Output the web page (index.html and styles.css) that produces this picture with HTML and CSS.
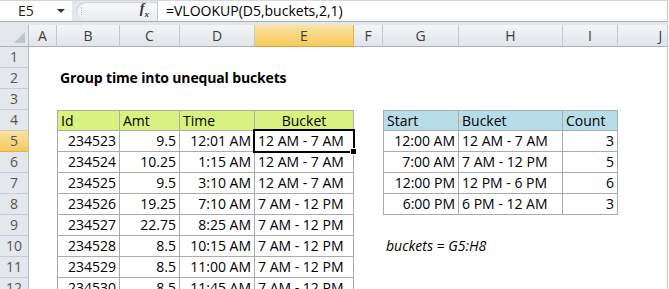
FILE: index.html
```html
<!DOCTYPE html>
<html lang="en">
<head>
    <meta charset="UTF-8">
    <title>Group time into unequal buckets</title>
    <link rel="stylesheet" href="styles.css">
</head>
<body>

    <!-- Formula Bar -->
    <div class="formula-bar">
        <div class="name-box">E5<span class="dropdown"></span></div>
        <div class="fx-area">
            <div class="grip">
                <span class="dots"></span>
                <span class="fx"><i>f</i><sub>x</sub></span>
            </div>
        </div>
        <div class="formula">=VLOOKUP(D5,buckets,2,1)</div>
    </div>
    <div class="band"></div>

    <!-- Sheet -->
    <div class="sheet">
        <div class="row heads">
            <div class="corner"></div>
            <div class="ch">A</div>
            <div class="ch">B</div>
            <div class="ch">C</div>
            <div class="ch">D</div>
            <div class="ch sel">E</div>
            <div class="ch">F</div>
            <div class="ch">G</div>
            <div class="ch">H</div>
            <div class="ch">I</div>
            <div class="ch">J</div>
        </div>

        <div class="row">
            <div class="rh">1</div>
        </div>

        <div class="row">
            <div class="rh">2</div>
            <div></div>
            <div class="c title">Group time into unequal buckets</div>
        </div>

        <div class="row">
            <div class="rh">3</div>
        </div>

        <div class="row">
            <div class="rh">4</div>
            <div></div>
            <div class="c t tl tt green">Id</div>
            <div class="c t tt green">Amt</div>
            <div class="c t tt green">Time</div>
            <div class="c t tt green ctr">Bucket</div>
            <div></div>
            <div class="c t tl tt blue">Start</div>
            <div class="c t tt blue">Bucket</div>
            <div class="c t tt blue">Count</div>
        </div>

        <div class="row">
            <div class="rh sel">5</div>
            <div></div>
            <div class="c t tl r">234523</div>
            <div class="c t r">9.5</div>
            <div class="c t r">12:01 AM</div>
            <div class="c t active">12 AM - 7 AM</div>
            <div></div>
            <div class="c t tl r">12:00 AM</div>
            <div class="c t">12 AM - 7 AM</div>
            <div class="c t r">3</div>
        </div>

        <div class="row">
            <div class="rh">6</div>
            <div></div>
            <div class="c t tl r">234524</div>
            <div class="c t r">10.25</div>
            <div class="c t r">1:15 AM</div>
            <div class="c t">12 AM - 7 AM</div>
            <div></div>
            <div class="c t tl r">7:00 AM</div>
            <div class="c t">7 AM - 12 PM</div>
            <div class="c t r">5</div>
        </div>

        <div class="row">
            <div class="rh">7</div>
            <div></div>
            <div class="c t tl r">234525</div>
            <div class="c t r">9.5</div>
            <div class="c t r">3:10 AM</div>
            <div class="c t">12 AM - 7 AM</div>
            <div></div>
            <div class="c t tl r">12:00 PM</div>
            <div class="c t">12 PM - 6 PM</div>
            <div class="c t r">6</div>
        </div>

        <div class="row">
            <div class="rh">8</div>
            <div></div>
            <div class="c t tl r">234526</div>
            <div class="c t r">19.25</div>
            <div class="c t r">7:10 AM</div>
            <div class="c t">7 AM - 12 PM</div>
            <div></div>
            <div class="c t tl r">6:00 PM</div>
            <div class="c t">6 PM - 12 AM</div>
            <div class="c t r">3</div>
        </div>

        <div class="row">
            <div class="rh">9</div>
            <div></div>
            <div class="c t tl r">234527</div>
            <div class="c t r">22.75</div>
            <div class="c t r">8:25 AM</div>
            <div class="c t">7 AM - 12 PM</div>
        </div>

        <div class="row">
            <div class="rh">10</div>
            <div></div>
            <div class="c t tl r">234528</div>
            <div class="c t r">8.5</div>
            <div class="c t r">10:15 AM</div>
            <div class="c t">7 AM - 12 PM</div>
            <div></div>
            <div class="c note">buckets = G5:H8</div>
        </div>

        <div class="row">
            <div class="rh">11</div>
            <div></div>
            <div class="c t tl r">234529</div>
            <div class="c t r">8.5</div>
            <div class="c t r">11:00 AM</div>
            <div class="c t">7 AM - 12 PM</div>
        </div>

        <div class="row">
            <div class="rh">12</div>
            <div></div>
            <div class="c t tl r">234530</div>
            <div class="c t r">8.5</div>
            <div class="c t r">11:45 AM</div>
            <div class="c t">7 AM - 12 PM</div>
        </div>
    </div>

</body>
</html>
```

FILE: styles.css
```css
/* General */
body {
    margin: 0;
    width: 669px;
    height: 289px;
    overflow: hidden;
    background: #fff;
    font-family: 'Open Sans', sans-serif;
    font-size: 14px;
    color: #000;
}

/* Formula Bar */
.formula-bar {
    display: flex;
    height: 20px;
    width: 667px;
    border-top: 1px solid #d4d7db;
    border-bottom: 1px solid #a9b0b8;
    border-right: 1px solid #c4c8cd;
    background: #fff;
}

.name-box {
    width: 72px;
    padding-left: 18px;
    box-sizing: border-box;
    line-height: 19px;
    position: relative;
    color: #1e1e1e;
}

.dropdown {
    position: absolute;
    left: 57px;
    top: 8px;
    border-left: 4px solid transparent;
    border-right: 4px solid transparent;
    border-top: 4px solid #333;
}

.fx-area {
    display: flex;
    align-items: center;
    width: 85px;
    background: #e4e7eb;
    padding-left: 4px;
    box-sizing: border-box;
}

.grip {
    flex: 1;
    display: flex;
    align-items: center;
    justify-content: space-between;
    height: 19px;
    padding: 0 8px 0 5px;
    border-radius: 10px 0 0 10px;
    background: linear-gradient(#fbfbfc, #e9ebee);
    box-shadow: inset 1px 1px 1px #cdd1d6;
}

.dots {
    width: 2px;
    height: 8px;
    border-left: 1px dotted #b4b9c0;
}

.fx {
    font-family: 'Liberation Serif', serif;
    font-weight: bold;
    font-size: 14px;
    color: #333;
    line-height: 14px;
}

.fx sub {
    font-size: 9px;
    font-style: italic;
}

.formula {
    flex: 1;
    border-left: 1px solid #c4c8cd;
    padding-left: 8px;
    line-height: 19px;
    white-space: nowrap;
}

.band {
    height: 3px;
    width: 668px;
    background: #e3e6ea;
}

/* Sheet */
.sheet {
    width: 667px;
    overflow: hidden;
    border-right: 1px solid #c4c8cd;
}

.row {
    display: grid;
    grid-template-columns: 29px 28px 63px 60px 75px 99px 29px 76px 104px 55px 86px;
    height: 21px;
}

.row.heads {
    height: 22px;
}

.corner {
    background: #e4e7eb;
    border-right: 1px solid #b9bec5;
    border-bottom: 1px solid #a9b0b8;
    position: relative;
}

.corner::after {
    content: '';
    position: absolute;
    right: 3px;
    bottom: 3px;
    border-left: 11px solid transparent;
    border-bottom: 11px solid #bfc4ca;
}

.ch {
    text-align: center;
    line-height: 21px;
    color: #3c3c3c;
    background: linear-gradient(#f4f5f7, #e1e4e8);
    border-right: 1px solid #c3c8ce;
    border-bottom: 1px solid #a9b0b8;
}

.ch.sel {
    background: linear-gradient(#fbe3a1, #f6c95c);
    border-right-color: #e2b356;
    border-bottom-color: #d9a43d;
}

.rh {
    text-align: center;
    line-height: 20px;
    color: #555;
    background: #e4e7eb;
    border-right: 1px solid #b9bec5;
    border-bottom: 1px solid #c8ccd2;
}

.rh.sel {
    background: linear-gradient(#fbe0a0, #f5c95e);
    border-bottom-color: #e0b057;
}

/* Cells */
.c {
    box-sizing: border-box;
    padding: 0 3px;
    line-height: 20px;
    white-space: nowrap;
}

.r {
    text-align: right;
}

.ctr {
    text-align: center;
}

.t {
    border-right: 1px solid #ababab;
    border-bottom: 1px solid #ababab;
}

.tl {
    border-left: 1px solid #ababab;
}

.tt {
    border-top: 1px solid #ababab;
    line-height: 19px;
}

.green {
    background-color: #d9f27f;
}

.blue {
    background-color: #b7dde8;
}

.title {
    font-weight: bold;
    letter-spacing: -0.15px;
}

.note {
    font-style: italic;
}

/* Active cell */
.active {
    position: relative;
}

.active::after {
    content: '';
    position: absolute;
    left: -2px;
    top: -2px;
    right: -2px;
    bottom: -2px;
    border: 2px solid #000;
}

.active::before {
    content: '';
    position: absolute;
    right: -4px;
    bottom: -4px;
    width: 5px;
    height: 5px;
    background: #000;
    border: 1px solid #fff;
    z-index: 1;
}
```
